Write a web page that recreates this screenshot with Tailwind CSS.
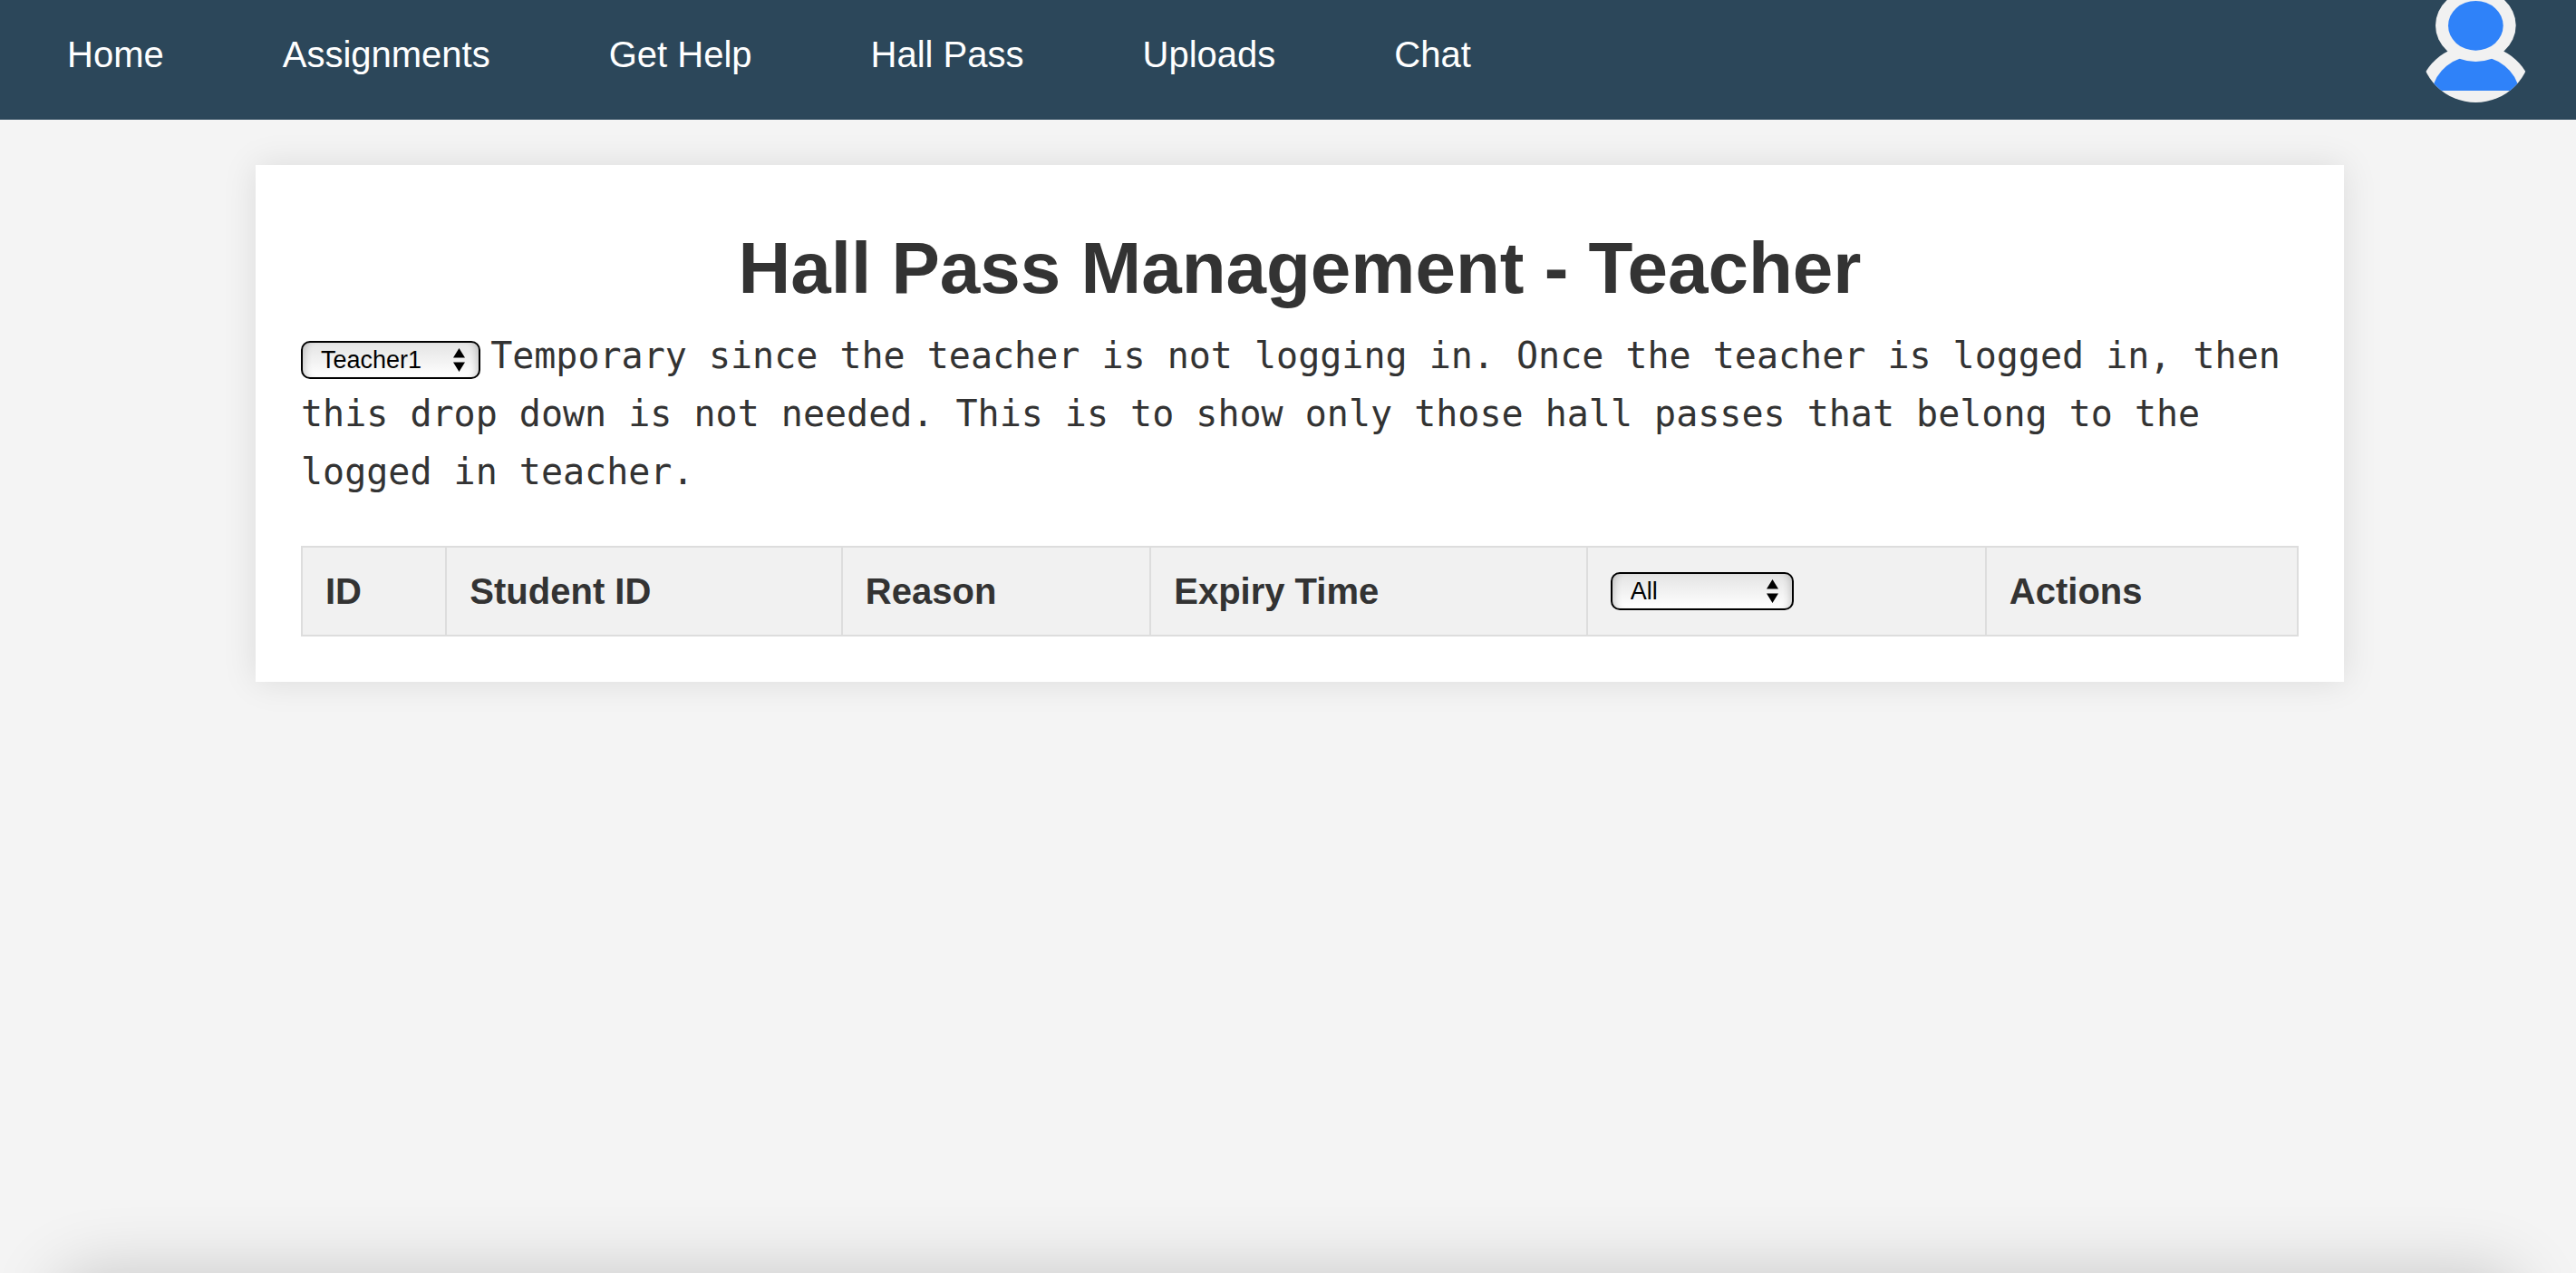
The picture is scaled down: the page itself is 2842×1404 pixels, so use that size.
<!DOCTYPE html>
<html lang="en">
<head>
<meta charset="utf-8">
<meta name="viewport" content="width=device-width, initial-scale=1">
<title>Hall Pass Management</title>
<script src="https://cdn.jsdelivr.net/npm/@tailwindcss/browser@4"></script>
</head>
<body class="min-h-screen bg-[#f4f4f4] font-['Liberation_Sans',Arial,sans-serif] text-[40px] leading-[64px] text-[#333]">
  <header class="flex items-start justify-between overflow-hidden bg-[#2c475a] pl-[74px] pr-[50px]">
    <nav class="flex gap-[131px] pt-[28px] pb-[40px] text-white">
      <a href="#">Home</a>
      <a href="#">Assignments</a>
      <a href="#">Get Help</a>
      <a href="#">Hall Pass</a>
      <a href="#">Uploads</a>
      <a href="#">Chat</a>
    </nav>
    <a href="#" aria-label="Profile" class="block">
      <svg class="block h-[114px] w-[122px]" viewBox="0 0 366 342" aria-hidden="true">
        <defs>
          <clipPath id="frame"><ellipse cx="184" cy="154" rx="184" ry="185"/></clipPath>
        </defs>
        <g clip-path="url(#frame)">
          <ellipse cx="184" cy="316" rx="187" ry="168" fill="#f1f1f1"/>
          <path d="M40 300 A145 130 0 0 1 328 300 Z" fill="#2f82f9"/>
          <ellipse cx="184" cy="84" rx="133" ry="120" fill="#f1f1f1"/>
          <ellipse cx="184" cy="85" rx="91" ry="82" fill="#2f82f9"/>
        </g>
      </svg>
    </a>
  </header>

  <main class="mt-[50px] mr-[256px] ml-[282px] bg-white p-[50px] shadow-[0_0_36px_rgba(0,0,0,0.1)]">
    <h1 class="text-center text-[80px] leading-[128px] font-bold">Hall Pass Management - Teacher</h1>
    <div>
      <span class="relative inline-flex leading-none">
        <select id="teacher" aria-label="Teacher" class="h-[42px] w-[198px] appearance-none rounded-[10px] border-2 border-black bg-linear-to-b from-[#e4e4e4] to-white pl-5 text-[27px] leading-[32px] text-black shadow-[inset_8px_0_8px_-6px_rgba(0,0,0,0.2),inset_-8px_0_8px_-6px_rgba(0,0,0,0.2)]">
          <option>Teacher1</option>
          <option>Teacher2</option>
        </select>
        <svg class="pointer-events-none absolute top-2 right-[17px] h-[26px] w-[13px]" viewBox="0 0 13 26" aria-hidden="true"><path d="M6.5 0 13 10.500H0zM0 15.500H13L6.500 26z"/></svg>
      </span>
      <label for="teacher" class="font-['DejaVu_Sans_Mono',monospace]">Temporary since the teacher is not logging in. Once the teacher is logged in, then this drop down is not needed. This is to show only those hall passes that belong to the logged in teacher.</label>
    </div>
    <table class="mt-[50px] w-full border-collapse text-left leading-[48px]">
      <thead>
        <tr class="bg-[#f1f1f1]">
          <th class="border-2 border-[#ddd] px-[25px] py-6">ID</th>
          <th class="border-2 border-[#ddd] px-[25px] py-6">Student ID</th>
          <th class="border-2 border-[#ddd] px-[25px] py-6">Reason</th>
          <th class="border-2 border-[#ddd] px-[25px] py-6">Expiry Time</th>
          <th class="border-2 border-[#ddd] px-[25px] font-normal">
            <span class="relative flex w-[202px] leading-none">
              <select aria-label="Status" class="h-[42px] w-full appearance-none rounded-[10px] border-2 border-black bg-linear-to-b from-[#e4e4e4] to-white pl-5 text-[27px] leading-[32px] text-black shadow-[inset_8px_0_8px_-6px_rgba(0,0,0,0.2),inset_-8px_0_8px_-6px_rgba(0,0,0,0.2)]">
                <option>All</option>
                <option>Requested</option>
                <option>Approved</option>
              </select>
              <svg class="pointer-events-none absolute top-2 right-[17px] h-[26px] w-[13px]" viewBox="0 0 13 26" aria-hidden="true"><path d="M6.5 0 13 10.500H0zM0 15.500H13L6.500 26z"/></svg>
            </span>
          </th>
          <th class="border-2 border-[#ddd] px-[25px] py-6">Actions</th>
        </tr>
      </thead>
    </table>
  </main>

  <div class="pointer-events-none fixed inset-x-[60px] top-full h-20 rounded-[40px] shadow-[0_0_76px_rgba(0,0,0,0.19)]"></div>
</body>
</html>
